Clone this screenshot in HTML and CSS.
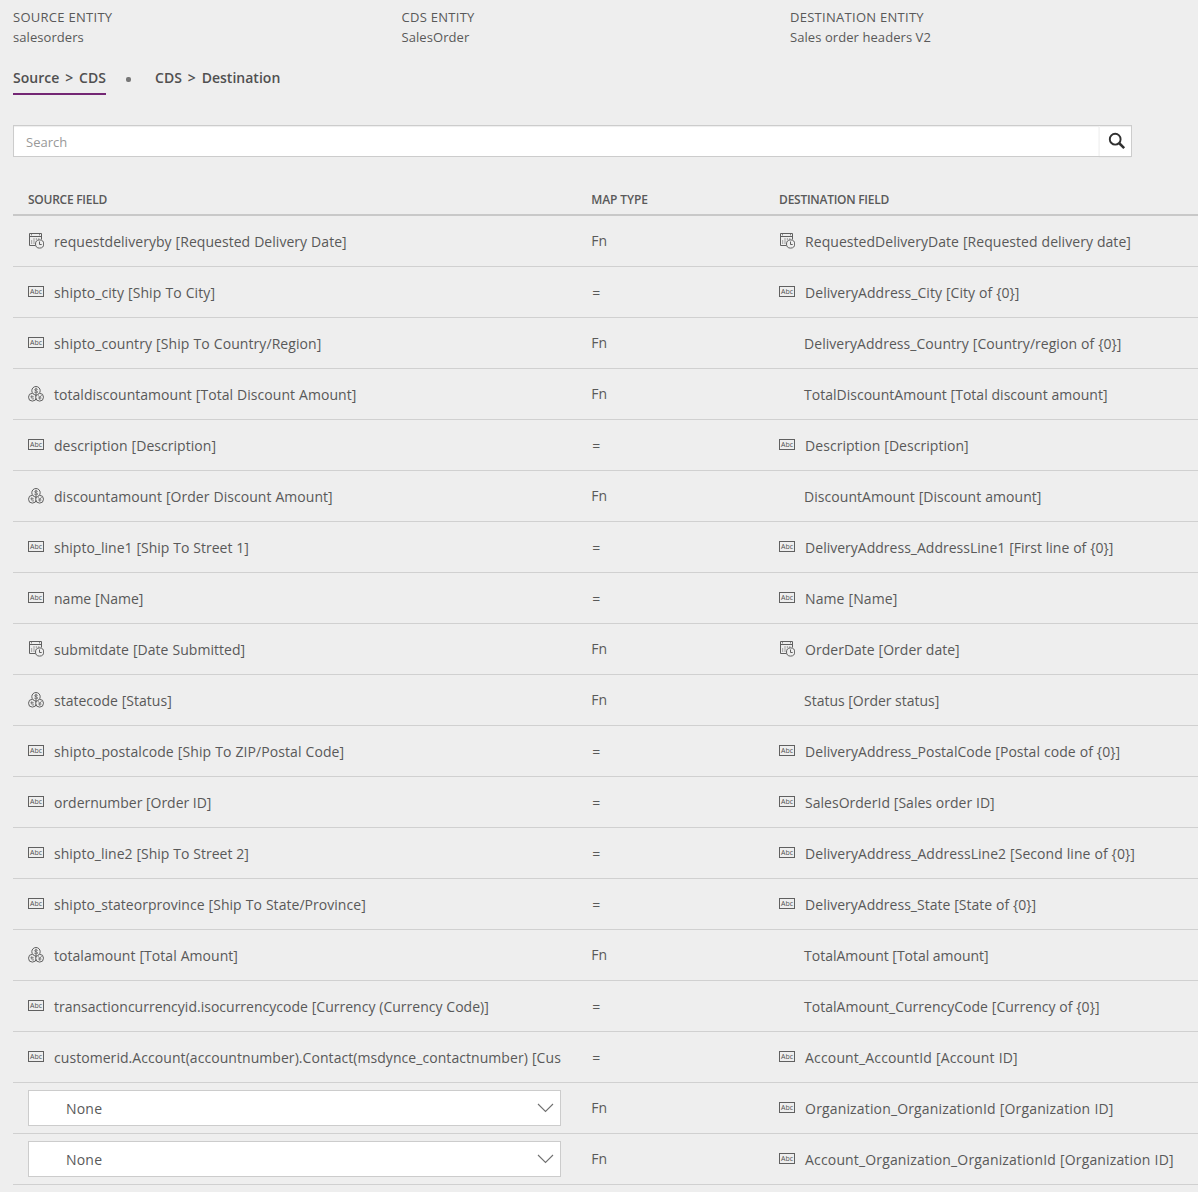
FILE: index.html
```html
<!DOCTYPE html>
<html lang="en">
<head>
<meta charset="utf-8">
<title>Field mapping</title>
<link rel="stylesheet" href="styles.css">
</head>
<body>
<svg class="sprite" width="0" height="0" aria-hidden="true">
  <symbol id="abc" viewBox="0 0 16 16">
    <rect x=".5" y="2.5" width="15" height="10" fill="none" stroke="#606060"/>
    <text x="2.1" y="10" class="abc-label" textLength="12" lengthAdjust="spacingAndGlyphs">Abc</text>
  </symbol>
  <symbol id="date" viewBox="0 0 16 16">
    <g fill="none" stroke="#606060">
      <path d="M7.5 12.5H1.5V.5H13.5V6.5M1.5 3.5H13.5"/>
      <path d="M3 1.8h1M11 1.8h1"/>
      <path stroke-width=".9" d="M5.4 6h1.2M7.8 6h1.2M10.2 6h1.2M3 8h1.2M5.4 8h1.2M3 10h1.2M5.4 10h1.2"/>
      <circle cx="11.6" cy="11" r="4.1" fill="#eee"/>
      <path d="M11.5 8.5v3h2.2"/>
    </g>
  </symbol>
  <symbol id="money" viewBox="0 0 16 16">
    <g fill="#eee" stroke="#606060">
      <circle cx="4.4" cy="11.2" r="3.9"/>
      <circle cx="11.6" cy="11.2" r="3.9"/>
      <circle cx="8" cy="4.7" r="4.2"/>
      <path fill="none" stroke-width=".85" d="M9.7 3.5C8.8 2.6 6.6 2.7 6.6 3.8S9.7 4.8 9.7 6 7.2 7 6.3 6.1M8 1.8v6"/>
      <path fill="none" stroke-width=".8" d="M2.4 10.8h3.4M3.8 9.2v3.2q.5 1 2.2.4M10 9.2l1.8 2 1.8-2M11.8 11v2.9M10.2 12h3.2"/>
    </g>
  </symbol>
</svg>

<header class="entities">
  <div><div class="label">SOURCE ENTITY</div><div class="value">salesorders</div></div>
  <div><div class="label">CDS ENTITY</div><div class="value">SalesOrder</div></div>
  <div><div class="label">DESTINATION ENTITY</div><div class="value">Sales order headers V2</div></div>
</header>

<nav class="tabs">
  <a class="tab active">Source &gt; CDS</a>
  <span class="dot"></span>
  <a class="tab">CDS &gt; Destination</a>
</nav>

<div class="search">
  <span class="placeholder">Search</span>
  <span class="search-btn"><svg width="18" height="18" viewBox="0 0 18 18"><circle cx="7.2" cy="7.2" r="5.4" fill="none" stroke="#303030" stroke-width="1.9"/><path d="M11 11l5.2 5.2" stroke="#303030" stroke-width="2.5"/></svg></span>
</div>

<main class="table">
  <div class="row head"><span>SOURCE FIELD</span><span class="map-head">MAP TYPE</span><span>DESTINATION FIELD</span></div>
  <div class="row"><div class="field"><svg class="icon"><use href="#date"/></svg><span class="name">requestdeliveryby [Requested Delivery Date]</span></div><div class="map">Fn</div><div class="field"><svg class="icon"><use href="#date"/></svg><span class="name">RequestedDeliveryDate [Requested delivery date]</span></div></div>
  <div class="row"><div class="field"><svg class="icon"><use href="#abc"/></svg><span class="name wide">shipto_city [Ship To City]</span></div><div class="map eq">=</div><div class="field"><svg class="icon"><use href="#abc"/></svg><span class="name">DeliveryAddress_City [City of {0}]</span></div></div>
  <div class="row"><div class="field"><svg class="icon"><use href="#abc"/></svg><span class="name wide">shipto_country [Ship To Country/Region]</span></div><div class="map">Fn</div><div class="field bare"><span class="name">DeliveryAddress_Country [Country/region of {0}]</span></div></div>
  <div class="row"><div class="field"><svg class="icon"><use href="#money"/></svg><span class="name">totaldiscountamount [Total Discount Amount]</span></div><div class="map">Fn</div><div class="field bare"><span class="name tight">TotalDiscountAmount [Total discount amount]</span></div></div>
  <div class="row"><div class="field"><svg class="icon"><use href="#abc"/></svg><span class="name">description [Description]</span></div><div class="map eq">=</div><div class="field"><svg class="icon"><use href="#abc"/></svg><span class="name">Description [Description]</span></div></div>
  <div class="row"><div class="field"><svg class="icon"><use href="#money"/></svg><span class="name">discountamount [Order Discount Amount]</span></div><div class="map">Fn</div><div class="field bare"><span class="name">DiscountAmount [Discount amount]</span></div></div>
  <div class="row"><div class="field"><svg class="icon"><use href="#abc"/></svg><span class="name tight">shipto_line1 [Ship To Street 1]</span></div><div class="map eq">=</div><div class="field"><svg class="icon"><use href="#abc"/></svg><span class="name tight">DeliveryAddress_AddressLine1 [First line of {0}]</span></div></div>
  <div class="row"><div class="field"><svg class="icon"><use href="#abc"/></svg><span class="name tight">name [Name]</span></div><div class="map eq">=</div><div class="field"><svg class="icon"><use href="#abc"/></svg><span class="name wide">Name [Name]</span></div></div>
  <div class="row"><div class="field"><svg class="icon"><use href="#date"/></svg><span class="name">submitdate [Date Submitted]</span></div><div class="map">Fn</div><div class="field"><svg class="icon"><use href="#date"/></svg><span class="name tight">OrderDate [Order date]</span></div></div>
  <div class="row"><div class="field"><svg class="icon"><use href="#money"/></svg><span class="name tight">statecode [Status]</span></div><div class="map">Fn</div><div class="field bare"><span class="name snug">Status [Order status]</span></div></div>
  <div class="row"><div class="field"><svg class="icon"><use href="#abc"/></svg><span class="name wide">shipto_postalcode [Ship To ZIP/Postal Code]</span></div><div class="map eq">=</div><div class="field"><svg class="icon"><use href="#abc"/></svg><span class="name">DeliveryAddress_PostalCode [Postal code of {0}]</span></div></div>
  <div class="row"><div class="field"><svg class="icon"><use href="#abc"/></svg><span class="name snug">ordernumber [Order ID]</span></div><div class="map eq">=</div><div class="field"><svg class="icon"><use href="#abc"/></svg><span class="name tight">SalesOrderId [Sales order ID]</span></div></div>
  <div class="row"><div class="field"><svg class="icon"><use href="#abc"/></svg><span class="name tight">shipto_line2 [Ship To Street 2]</span></div><div class="map eq">=</div><div class="field"><svg class="icon"><use href="#abc"/></svg><span class="name">DeliveryAddress_AddressLine2 [Second line of {0}]</span></div></div>
  <div class="row"><div class="field"><svg class="icon"><use href="#abc"/></svg><span class="name">shipto_stateorprovince [Ship To State/Province]</span></div><div class="map eq">=</div><div class="field"><svg class="icon"><use href="#abc"/></svg><span class="name tight">DeliveryAddress_State [State of {0}]</span></div></div>
  <div class="row"><div class="field"><svg class="icon"><use href="#money"/></svg><span class="name">totalamount [Total Amount]</span></div><div class="map">Fn</div><div class="field bare"><span class="name snug">TotalAmount [Total amount]</span></div></div>
  <div class="row"><div class="field"><svg class="icon"><use href="#abc"/></svg><span class="name tight">transactioncurrencyid.isocurrencycode [Currency (Currency Code)]</span></div><div class="map eq">=</div><div class="field bare"><span class="name tight">TotalAmount_CurrencyCode [Currency of {0}]</span></div></div>
  <div class="row"><div class="field"><svg class="icon"><use href="#abc"/></svg><span class="name long">customerid.Account(accountnumber).Contact(msdynce_contactnumber) [Cus</span></div><div class="map eq">=</div><div class="field"><svg class="icon"><use href="#abc"/></svg><span class="name loose">Account_AccountId [Account ID]</span></div></div>
  <div class="row"><div class="select"><span>None</span><svg width="17" height="10" viewBox="0 0 17 10"><path d="M1 1l7.5 7.5L16 1" fill="none" stroke="#707070" stroke-width="1.1"/></svg></div><div class="map">Fn</div><div class="field"><svg class="icon"><use href="#abc"/></svg><span class="name loose">Organization_OrganizationId [Organization ID]</span></div></div>
  <div class="row"><div class="select"><span>None</span><svg width="17" height="10" viewBox="0 0 17 10"><path d="M1 1l7.5 7.5L16 1" fill="none" stroke="#707070" stroke-width="1.1"/></svg></div><div class="map">Fn</div><div class="field"><svg class="icon"><use href="#abc"/></svg><span class="name loose">Account_Organization_OrganizationId [Organization ID]</span></div></div>
</main>
</body>
</html>
```
FILE: styles.css
```css
* { box-sizing: border-box; }
body {
  margin: 0;
  height: 1192px;
  overflow: hidden;
  padding: 7px 0 0 13px;
  background: #eee;
  color: #595959;
  font-family: "Open Sans", "Noto Sans", sans-serif;
  font-size: 14px;
}
.sprite { display: none; }
.abc-label { font: 400 6.5px "Open Sans", sans-serif; fill: #505050; }

.entities { display: grid; grid-template-columns: 388.5px 388.5px 1fr; font-size: 13px; line-height: 20px; }
.entities .label { letter-spacing: .28px; }
.entities .value { letter-spacing: .07px; }

.tabs { display: flex; align-items: flex-start; height: 49px; margin-top: 20px; }
.tab { height: 28px; line-height: 21px; font-weight: 600; color: #505050; letter-spacing: .02px; word-spacing: 2.2px; white-space: nowrap; }
.tab.active { width: 93px; border-bottom: 2px solid #742774; }
.dot { width: 5px; height: 5px; border-radius: 2px; background: #777; margin: 10px 24px 0 20px; }

.search { display: flex; justify-content: space-between; align-items: center; width: 1119px; height: 32px; margin-top: 9px; border: 1px solid #ccc; background: #fff; box-shadow: inset 0 1px 1px #eee; }
.placeholder { padding-left: 12px; padding-top: 2px; font-size: 13px; color: #999; }
.search-btn { width: 32px; height: 30px; padding: 6px 0 0 7.5px; border-left: 1px solid #f4f4f4; box-shadow: 0 1px 1px #ccc; }
.search-btn svg { display: block; }

.table { margin-top: 27px; }
.row { display: grid; grid-template-columns: 533px 157.5px 1fr; column-gap: 30.3px; padding-left: 15px; height: 51px; border-bottom: 1px solid #d0d0d0; align-items: center; white-space: nowrap; }
.row.head { height: 32px; border-bottom: 2px solid #c8c8c8; font-size: 12px; font-weight: 600; letter-spacing: -.26px; }
.row.head .map-head { letter-spacing: -.12px; }
.field { display: flex; align-items: center; overflow: hidden; }
.field.bare { padding-left: 25px; }
.icon { flex: none; width: 16px; height: 16px; margin-right: 10px; }
.name { padding-top: 1px; letter-spacing: .04px; word-spacing: .3px; }
.name.snug { letter-spacing: -.02px; word-spacing: 0; }
.name.tight { letter-spacing: .01px; word-spacing: .2px; }
.name.wide { letter-spacing: .08px; word-spacing: .3px; }
.name.loose { letter-spacing: .15px; word-spacing: .3px; }
.name.long { letter-spacing: .06px; word-spacing: .4px; }
.map { padding-bottom: 2px; }
.map.eq { padding: 1px 0 0 1px; }
.select { display: flex; align-items: center; justify-content: space-between; height: 36px; background: #fff; border: 1px solid #ccc; padding: 0 6px 0 37px; letter-spacing: .2px; }
```
